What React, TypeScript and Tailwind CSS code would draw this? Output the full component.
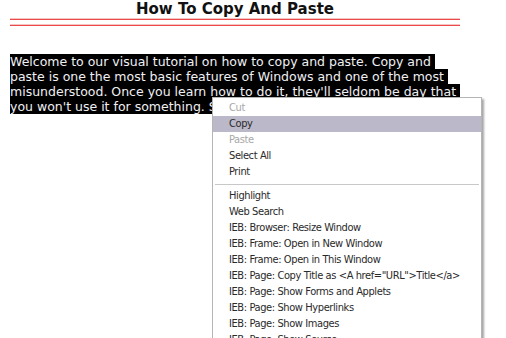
import React from "react";

const lines = [
  "Welcome to our visual tutorial on how to copy and paste. Copy and ",
  "paste is one the most basic features of Windows and one of the most ",
  "misunderstood. Once you learn how to do it, they'll seldom be day that ",
  "you won't use it for something. Select the text you want to copy. ",
];

type Item = { label: string; disabled?: boolean; active?: boolean };

const group1: Item[] = [
  { label: "Cut", disabled: true },
  { label: "Copy", active: true },
  { label: "Paste", disabled: true },
  { label: "Select All" },
  { label: "Print" },
];

const group2: Item[] = [
  { label: "Highlight" },
  { label: "Web Search" },
  { label: "IEB: Browser: Resize Window" },
  { label: "IEB: Frame: Open in New Window" },
  { label: "IEB: Frame: Open in This Window" },
  { label: 'IEB: Page: Copy Title as <A href="URL">Title</a>' },
  { label: "IEB: Page: Show Forms and Applets" },
  { label: "IEB: Page: Show Hyperlinks" },
  { label: "IEB: Page: Show Images" },
  { label: "IEB: Page: Show Source" },
];

function Row({ item }: { item: Item }) {
  return (
    <div
      className={
        "h-4 pl-4 flex items-center whitespace-nowrap " +
        (item.active ? "bg-[#bbb8c9] " : "") +
        (item.disabled ? "text-[#a8a8a8]" : "text-[#2a2a2a]")
      }
    >
      {item.label}
    </div>
  );
}

export default function App() {
  return (
    <div className="relative w-[506px] h-[338px] overflow-hidden bg-white">
      <div className="w-[450px] ml-[10px]">
        <div
          className="h-[18px] text-center text-[15px] leading-[19px] font-bold text-[#111]"
          style={{ fontFamily: "Verdana, 'DejaVu Sans', sans-serif" }}
        >
          How To Copy And Paste
        </div>
        <div className="h-px bg-[#f7c4c4]" />
        <div className="h-px bg-[#ec4a4a]" />
        <div className="h-[4px]" />
        <div className="h-px bg-[#f7c4c4]" />
        <div className="h-px bg-[#ec4a4a]" />
      </div>
      <div
        className="mt-[28px] ml-[10px] text-[12.5px] leading-[15px] text-[#f0f0f4]"
        style={{ fontFamily: "Verdana, 'DejaVu Sans', sans-serif" }}
      >
        {lines.map((l, i) => (
          <div key={i}>
            <span className="bg-black whitespace-pre">{l}</span>
          </div>
        ))}
      </div>

      <div
        className="absolute left-[212px] top-[97px] w-[270px] h-[260px] bg-white border border-[#b5b5b5] shadow-[2px_2px_2px_rgba(0,0,0,0.35)] py-[2px] text-[11px] tracking-[-0.4px]"
        style={{ fontFamily: "'DejaVu Sans Condensed', 'DejaVu Sans', sans-serif" }}
      >
        {group1.map((it) => (
          <Row key={it.label} item={it} />
        ))}
        <div className="h-[8px] flex items-center px-[2px]">
          <div className="h-px w-full bg-[#c8c8c8]" />
        </div>
        {group2.map((it) => (
          <Row key={it.label} item={it} />
        ))}
      </div>
    </div>
  );
}
